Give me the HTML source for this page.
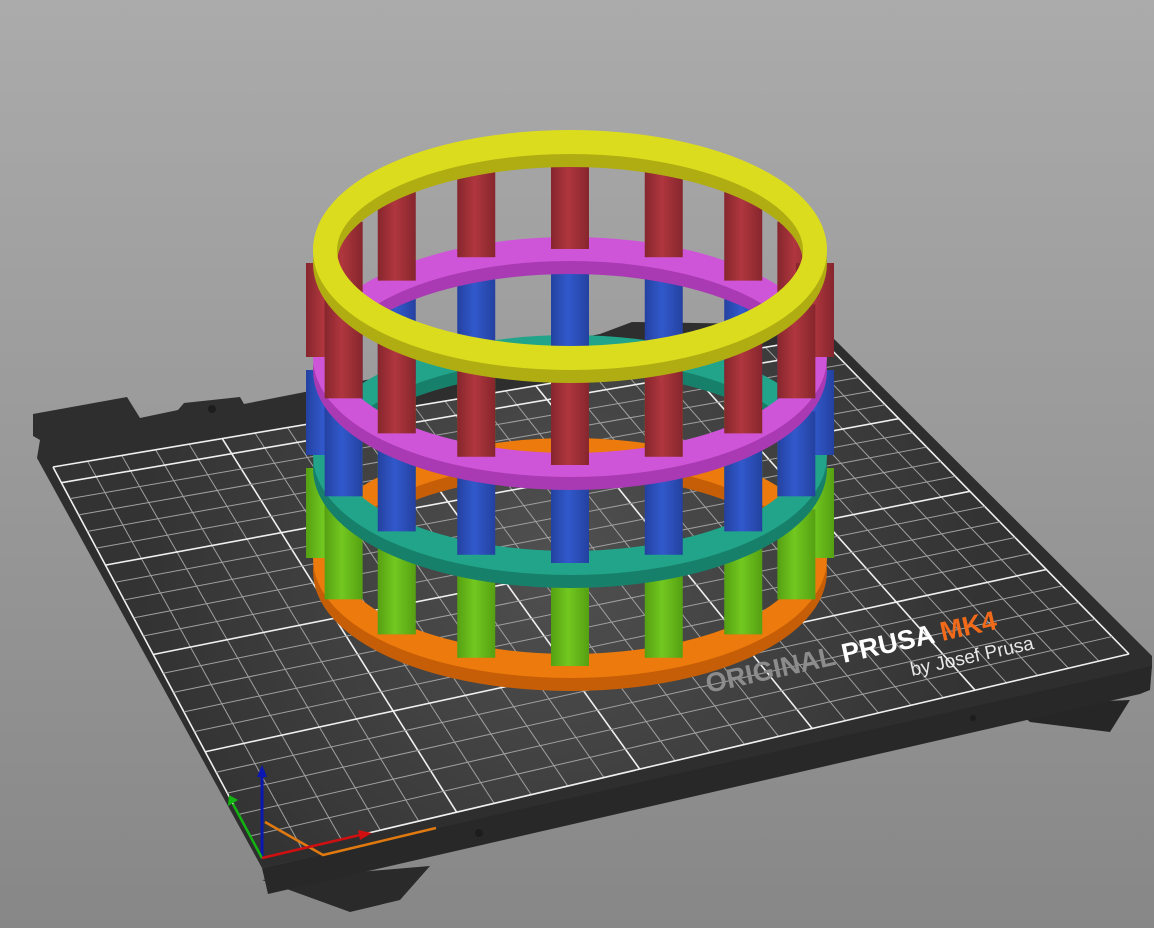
<!DOCTYPE html>
<html><head><meta charset="utf-8"><style>
html,body{margin:0;padding:0;width:1154px;height:928px;overflow:hidden;background:linear-gradient(#aaaaaa,#8a8a8a);}
svg{display:block}
</style></head><body>
<svg id="s" width="1154" height="928" viewBox="0 0 1154 928" xmlns="http://www.w3.org/2000/svg">
<defs>
<linearGradient id="bg" x1="0" y1="0" x2="0" y2="1"><stop offset="0" stop-color="#ababab"/><stop offset="1" stop-color="#878787"/></linearGradient>
<radialGradient id="bedg" cx="560" cy="560" r="420" gradientUnits="userSpaceOnUse"><stop offset="0" stop-color="#505050"/><stop offset="1" stop-color="#333333"/></radialGradient>
</defs>
<rect width="1154" height="928" fill="url(#bg)"/>
<polygon points="262,880 350,912 400,900 430,866" fill="#2a2a2a"/>
<polygon points="1010,705 1030,722 1110,732 1130,700" fill="#262626"/>
<polygon points="33,414 127,397 140,418 178,410 184,403 240,397 244,404 600,334 632,322 820,325 1152,656 1152,668 262,868 37,458 40,440 33,436" fill="#2e2e2e"/>
<polygon points="262,868 1152,666 1150,690 1140,694 268,894" fill="#282828"/>
<g id="grid"></g>
<g transform="translate(708,693) rotate(-12.5)" font-family="Liberation Sans, sans-serif" font-weight="bold" font-size="27">
<text x="0" y="0" fill="#8c8c8c">ORIGINAL <tspan fill="#ffffff">PRUSA</tspan> <tspan fill="#f06a1a">MK4</tspan></text>
</g>
<text transform="translate(912,676) rotate(-12.5)" font-family="Liberation Sans, sans-serif" font-size="19" fill="#e8e8e8">by Josef Prusa</text>
<circle cx="479" cy="833" r="4" fill="#1d1d1d"/>
<circle cx="973" cy="718" r="3" fill="#1d1d1d"/>
<circle cx="212" cy="409" r="4" fill="#1d1d1d"/>
<polyline points="265,822 323,855 436,828" fill="none" stroke="#e07a10" stroke-width="2.5"/>
<line x1="262" y1="858" x2="262" y2="775" stroke="#0a17b0" stroke-width="3"/>
<polygon points="257,777 267,777 262,765" fill="#0a17b0"/>
<line x1="262" y1="858" x2="233" y2="804" stroke="#12b412" stroke-width="2.5"/>
<polygon points="228,806 238,800 229,795" fill="#12b412"/>
<line x1="262" y1="858" x2="360" y2="835" stroke="#d01010" stroke-width="2.5"/>
<polygon points="358,830 360,840 372,833" fill="#d01010"/>
<g id="obj"></g>
</svg>
<script>
(function(){
var NS="http://www.w3.org/2000/svg";
function el(p,t,a){var e=document.createElementNS(NS,t);for(var k in a)e.setAttribute(k,a[k]);p.appendChild(e);return e;}
var P=[[262,858],[1129,654],[820,338],[53,467]];
var x0=P[0][0],y0=P[0][1],x1=P[1][0],y1=P[1][1],x2=P[2][0],y2=P[2][1],x3=P[3][0],y3=P[3][1];
var dx1=x1-x2,dx2=x3-x2,dx3=x0-x1+x2-x3,dy1=y1-y2,dy2=y3-y2,dy3=y0-y1+y2-y3;
var den=dx1*dy2-dx2*dy1;
var g=(dx3*dy2-dx2*dy3)/den,h=(dx1*dy3-dx3*dy1)/den;
var a=x1-x0+g*x1,b=x3-x0+h*x3,c=x0,d=y1-y0+g*y1,e=y3-y0+h*y3,f=y0;
function M(u,v){var w=g*u+h*v+1;return [(a*u+b*v+c)/w,(d*u+e*v+f)/w];}
var G=document.getElementById('grid');
var pts=[M(0,0),M(1,0),M(1,1),M(0,1)].map(function(p){return p.join(',')}).join(' ');
el(G,'polygon',{points:pts,fill:'url(#bedg)'});
for(var i=0;i<=25;i++){var u=i/25,p=M(u,0),q=M(u,1),maj=(i%5==0);
 el(G,'line',{x1:p[0],y1:p[1],x2:q[0],y2:q[1],stroke:maj?'#f0f0f0':'#a0a0a0','stroke-width':maj?1.6:1});}
for(var j=0;j<=21;j++){var v=j/21,p=M(0,v),q=M(1,v),maj=(j%5==0)||j==21;
 el(G,'line',{x1:p[0],y1:p[1],x2:q[0],y2:q[1],stroke:maj?'#f0f0f0':'#a0a0a0','stroke-width':maj?1.6:1});}
var O=document.getElementById('obj');
var cx=570,rx=245,ry=108,W=24,H=13;
var rings=[{y:558,c:'#ec7a0c',d:'#c55e06'},{y:455,c:'#22a48a',d:'#17806a'},{y:357,c:'#cf55d8',d:'#a93ab3'},{y:250,c:'#dcdc1e',d:'#b0ad12'}];
var rods=[{c:'#72c820',d:'#55a012'},{c:'#3159cc',d:'#2441a0'},{c:'#b0363e',d:'#86262d'}];
var N=16,R=19;
function arc(r,front,col,dy){var y=r.y+dy;
 var dstr=front?('M '+(cx+rx)+' '+y+' A '+rx+' '+ry+' 0 0 1 '+(cx-rx)+' '+y):('M '+(cx-rx)+' '+y+' A '+rx+' '+ry+' 0 0 1 '+(cx+rx)+' '+y);
 el(O,'path',{d:dstr,fill:'none',stroke:col,'stroke-width':W});}
function ring(r,front){arc(r,front,r.d,H);arc(r,front,r.c,0);}
function rod(l,k,front){var th=k*2*Math.PI/N,s=Math.sin(th),co=Math.cos(th);
 if(front!=(co>=0))return;
 var x=cx+rx*s,yb=rings[l].y+ry*co,yt=rings[l+1].y+ry*co+H;
 el(O,'rect',{x:x-R,y:yt,width:2*R,height:yb-yt,fill:'url(#rg'+l+')'});
}
var defs=document.querySelector('defs');
rods.forEach(function(rc,l){var lg=el(defs,'linearGradient',{id:'rg'+l,x1:0,y1:0,x2:1,y2:0});
 el(lg,'stop',{offset:0,'stop-color':rc.d});el(lg,'stop',{offset:0.45,'stop-color':rc.c});el(lg,'stop',{offset:1,'stop-color':rc.d});});
for(var l=0;l<4;l++){ring(rings[l],false);if(l<3){var order=[];for(var k=0;k<N;k++)order.push(k);order.sort(function(A,B){return Math.cos(B*2*Math.PI/N)-Math.cos(A*2*Math.PI/N)});order.forEach(function(k){rod(l,k,false)});}}
for(var l=0;l<4;l++){ring(rings[l],true);if(l<3){var order=[];for(var k=0;k<N;k++)order.push(k);order.sort(function(A,B){return Math.cos(A*2*Math.PI/N)-Math.cos(B*2*Math.PI/N)});order.forEach(function(k){rod(l,k,true)});}}
})();
</script>
</body></html>
